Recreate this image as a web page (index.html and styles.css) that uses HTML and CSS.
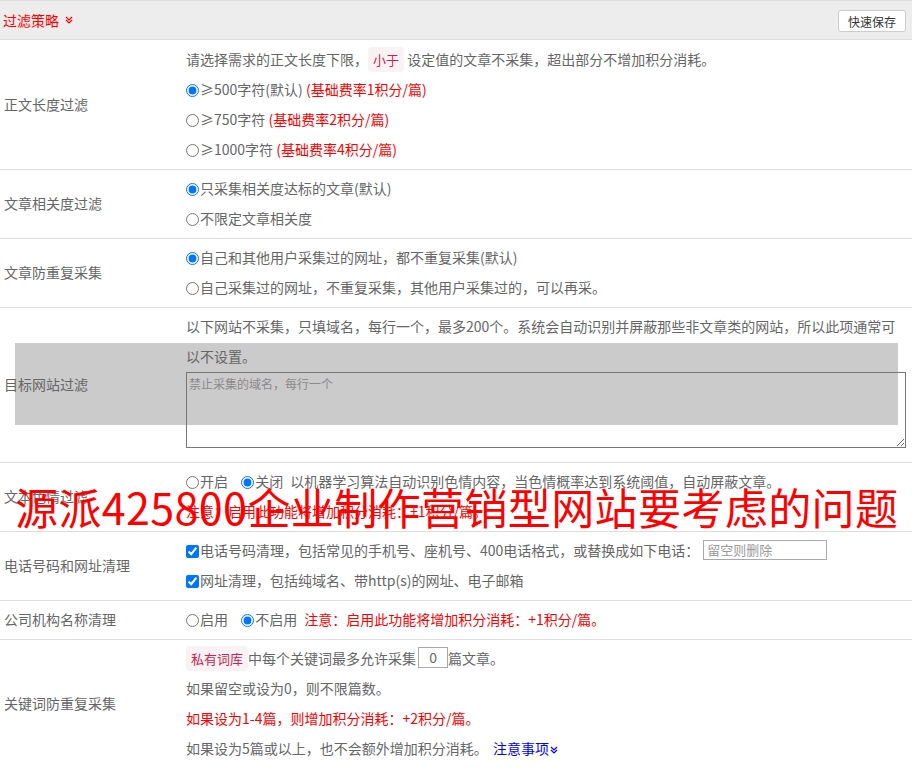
FILE: index.html
```html
<!DOCTYPE html>
<html>
<head>
    <meta charset="UTF-8">
    <title>过滤策略</title>
    <link rel="stylesheet" href="styles.css">
</head>
<body>
    <div class="panel">
        <div class="panel-head">
            <span class="panel-title">过滤策略
                <svg class="chev" viewBox="0 0 8 8"><path d="M1 1l3 3 3-3M1 4l3 3 3-3"/></svg>
            </span>
            <button class="btn-save">快速保存</button>
        </div>

        <div class="row">
            <div class="row-label">正文长度过滤</div>
            <div class="row-body">
                <div class="line intro">请选择需求的正文长度下限，<code class="tag">小于</code> 设定值的文章不采集，超出部分不增加积分消耗。</div>
                <label class="line"><input type="radio" name="len" checked>≥500字符(默认) <span class="red">(基础费率1积分/篇)</span></label>
                <label class="line"><input type="radio" name="len">≥750字符 <span class="red">(基础费率2积分/篇)</span></label>
                <label class="line"><input type="radio" name="len">≥1000字符 <span class="red">(基础费率4积分/篇)</span></label>
            </div>
        </div>

        <div class="row">
            <div class="row-label">文章相关度过滤</div>
            <div class="row-body">
                <label class="line"><input type="radio" name="rel" checked>只采集相关度达标的文章(默认)</label>
                <label class="line"><input type="radio" name="rel">不限定文章相关度</label>
            </div>
        </div>

        <div class="row">
            <div class="row-label">文章防重复采集</div>
            <div class="row-body">
                <label class="line"><input type="radio" name="dup" checked>自己和其他用户采集过的网址，都不重复采集(默认)</label>
                <label class="line"><input type="radio" name="dup">自己采集过的网址，不重复采集，其他用户采集过的，可以再采。</label>
            </div>
        </div>

        <div class="row">
            <div class="row-label">目标网站过滤</div>
            <div class="row-body">
                <div class="line">以下网站不采集，只填域名，每行一个，最多200个。系统会自动识别并屏蔽那些非文章类的网站，所以此项通常可以不设置。</div>
                <textarea class="domains" placeholder="禁止采集的域名，每行一个"></textarea>
            </div>
        </div>

        <div class="row">
            <div class="row-label">文本色情过滤</div>
            <div class="row-body">
                <div class="line">
                    <label class="opt"><input type="radio" name="porn">开启</label>
                    <label class="opt last"><input type="radio" name="porn" checked>关闭</label>
                    以机器学习算法自动识别色情内容，当色情概率达到系统阈值，自动屏蔽文章。
                </div>
                <div class="line red">注意：启用此功能将增加积分消耗：+1积分/篇。</div>
            </div>
        </div>

        <div class="row">
            <div class="row-label">电话号码和网址清理</div>
            <div class="row-body">
                <label class="line"><input type="checkbox" checked>电话号码清理，包括常见的手机号、座机号、400电话格式，或替换成如下电话：<input class="phone" type="text" placeholder="留空则删除"></label>
                <label class="line"><input type="checkbox" checked>网址清理，包括纯域名、带http(s)的网址、电子邮箱</label>
            </div>
        </div>

        <div class="row">
            <div class="row-label">公司机构名称清理</div>
            <div class="row-body">
                <div class="line">
                    <label class="opt"><input type="radio" name="org">启用</label>
                    <label class="opt last"><input type="radio" name="org" checked>不启用</label>
                    <span class="red">注意：启用此功能将增加积分消耗：+1积分/篇。</span>
                </div>
            </div>
        </div>

        <div class="row">
            <div class="row-label">关键词防重复采集</div>
            <div class="row-body">
                <div class="line"><code class="tag">私有词库</code>中每个关键词最多允许采集<input class="num" type="text" value="0">篇文章。</div>
                <div class="line">如果留空或设为0，则不限篇数。</div>
                <div class="line red">如果设为1-4篇，则增加积分消耗：+2积分/篇。</div>
                <div class="line">如果设为5篇或以上，也不会额外增加积分消耗。 <a class="more" href="#">注意事项<svg class="chev" viewBox="0 0 8 8"><path d="M1 1l3 3 3-3M1 4l3 3 3-3"/></svg></a></div>
            </div>
        </div>
    </div>

    <div class="shade"></div>
    <div class="watermark">源派425800企业制作营销型网站要考虑的问题</div>
</body>
</html>
```

FILE: styles.css
```css
:root {
    --text: #666666;
    --red: #ff0000;
    --border: #dddddd;
    --head-bg: #ededed;
    --tag-bg: #f9f2f4;
    --tag-text: #c7254e;
}

html, body {
    margin: 0;
    padding: 0;
    background: #ffffff;
}

body {
    font-family: "Noto Sans CJK SC", "Noto Sans", sans-serif;
    font-size: 14px;
    color: var(--text);
    height: 768px;
    overflow: hidden;
    position: relative;
}

.panel {
    position: relative;
    z-index: 1;
}

.panel-head {
    display: flex;
    align-items: center;
    justify-content: space-between;
    height: 38px;
    padding: 0 6px 0 3px;
    background: var(--head-bg);
    border-top: 1px solid var(--border);
    border-bottom: 1px solid var(--border);
}

.panel-title {
    color: var(--red);
    display: flex;
    align-items: center;
    gap: 6px;
}

.chev {
    width: 8px;
    height: 8px;
    fill: none;
    stroke: currentColor;
    stroke-width: 1.2;
}

.btn-save {
    font-family: inherit;
    font-size: 12px;
    color: #333333;
    background: #ffffff;
    border: 1px solid #cccccc;
    border-radius: 3px;
    height: 22px;
    width: 68px;
    padding: 0;
    margin-top: 2px;
}

.row {
    display: grid;
    grid-template-columns: 186px 1fr;
    border-bottom: 1px solid var(--border);
}

.row-label {
    display: flex;
    align-items: center;
    padding-left: 4px;
    padding-bottom: 2px;
}

.row-body {
    padding: 3px 6px 5px 0;
}

.line {
    display: block;
    line-height: 30px;
}

.line.intro {
    margin-top: 1px;
}

.opt {
    margin-right: 10px;
}

.opt.last {
    margin-right: 4px;
}

input[type="radio"],
input[type="checkbox"] {
    margin: 0 1px 0 0;
    width: 13px;
    height: 13px;
    vertical-align: -2px;
}

.red {
    color: var(--red);
}

.tag {
    font-family: inherit;
    font-size: 13px;
    line-height: 1;
    color: var(--tag-text);
    background: var(--tag-bg);
    border-radius: 4px;
    padding: 3px 5px;
}

.domains {
    display: block;
    box-sizing: border-box;
    width: 100%;
    height: 76px;
    margin: 1px 0 9px;
    padding: 2px 2px;
    border: 1px solid #767676;
    background: transparent;
    font-family: inherit;
    font-size: 12px;
    resize: both;
}

.domains::placeholder {
    color: #8a8a8a;
}

.phone {
    box-sizing: border-box;
    width: 124px;
    height: 20px;
    margin-left: 4px;
    padding: 0 3px;
    border: 1px solid #a9a9a9;
    font-family: inherit;
    font-size: 13px;
    vertical-align: 1px;
}

.phone::placeholder {
    color: #999999;
}

.num {
    box-sizing: border-box;
    width: 30px;
    height: 21px;
    margin-left: 2px;
    padding: 0;
    border: 1px solid #a9a9a9;
    font-family: inherit;
    font-size: 14px;
    color: var(--text);
    text-align: center;
    vertical-align: 1px;
}

.more {
    color: #0000ff;
    text-decoration: none;
    margin-left: 2px;
}

.more .chev {
    margin-left: 1px;
}

.shade {
    position: absolute;
    left: 15px;
    top: 343px;
    width: 883px;
    height: 82px;
    background: #cbcbcb;
    z-index: 0;
}

.watermark {
    position: absolute;
    left: 15px;
    top: 485px;
    z-index: 2;
    font-size: 43px;
    line-height: 43px;
    letter-spacing: 0.4px;
    color: var(--red);
    white-space: nowrap;
}
```
